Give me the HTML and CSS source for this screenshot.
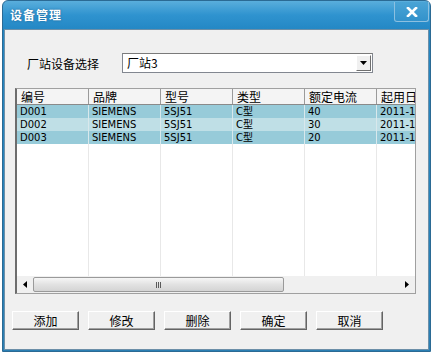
FILE: index.html
```html
<!DOCTYPE html>
<html>
<head>
<meta charset="utf-8">
<link rel="stylesheet" href="styles.css">
</head>
<body>
<div class="window">
  <div class="titlebar">
    <span class="title">设备管理</span>
    <span class="close"><svg width="12" height="10" viewBox="0 0 12 10"><path d="M2 1 L10 9 M10 1 L2 9" stroke="#fff" stroke-width="2.6" stroke-linecap="square"/></svg></span>
  </div>
  <div class="client">
    <div class="select-row">
      <span class="label">厂站设备选择</span>
      <div class="combo">
        <span class="combo-text">厂站3</span>
        <span class="combo-btn"><svg width="7" height="4" viewBox="0 0 7 4"><path d="M0 0 H7 L3.5 4 Z" fill="#000"/></svg></span>
      </div>
    </div>
    <div class="grid">
      <div class="grid-body">
        <div class="row head">
          <span class="cell">编号</span><span class="cell">品牌</span><span class="cell">型号</span><span class="cell">类型</span><span class="cell">额定电流</span><span class="cell last">起用日</span>
        </div>
        <div class="row dark">
          <span class="cell">D001</span><span class="cell">SIEMENS</span><span class="cell">5SJ51</span><span class="cell">C型</span><span class="cell">40</span><span class="cell last">2011-11</span>
        </div>
        <div class="row light">
          <span class="cell">D002</span><span class="cell">SIEMENS</span><span class="cell">5SJ51</span><span class="cell">C型</span><span class="cell">30</span><span class="cell last">2011-11</span>
        </div>
        <div class="row dark">
          <span class="cell">D003</span><span class="cell">SIEMENS</span><span class="cell">5SJ51</span><span class="cell">C型</span><span class="cell">20</span><span class="cell last">2011-11</span>
        </div>
        <div class="row empty">
          <span class="cell"></span><span class="cell"></span><span class="cell"></span><span class="cell"></span><span class="cell"></span><span class="cell last"></span>
        </div>
      </div>
      <div class="hscroll">
        <span class="arrow"><svg width="4" height="7" viewBox="0 0 4 7"><path d="M4 0 V7 L0 3.5 Z" fill="#000"/></svg></span>
        <div class="track">
          <div class="thumb"><span class="grip"></span><span class="grip"></span><span class="grip"></span></div>
        </div>
        <span class="arrow"><svg width="4" height="7" viewBox="0 0 4 7"><path d="M0 0 V7 L4 3.5 Z" fill="#000"/></svg></span>
      </div>
    </div>
    <div class="buttons">
      <button class="btn">添加</button>
      <button class="btn">修改</button>
      <button class="btn">删除</button>
      <button class="btn">确定</button>
      <button class="btn">取消</button>
    </div>
  </div>
</div>
</body>
</html>
```

FILE: styles.css
```css
* { box-sizing: border-box; }
html, body { margin: 0; padding: 0; background: #ffffff; }
body {
  width: 433px;
  height: 355px;
  font-family: "Noto Sans CJK SC", "DejaVu Sans", sans-serif;
  font-size: 12px;
  color: #000;
}
.window {
  margin: 0 2px 0 2px;
  height: 352px;
  border-radius: 6px 6px 0 0;
  background: linear-gradient(to bottom, #5aaedc 0px, #2f93cf 14px, #2387c4 29px, #2a7fb4 100%);
  border: 1px solid #2b6a94;
  display: flex;
  flex-direction: column;
}
.titlebar {
  height: 28px;
  display: flex;
  align-items: center;
  justify-content: space-between;
  padding: 0 4px 0 7px;
  position: relative;
}
.title {
  color: #fff;
  font-weight: bold;
  font-size: 12px;
  letter-spacing: 1px;
  margin-top: -1px;
  text-shadow: 0 0 2px rgba(0,40,80,0.5);
}
.close {
  position: absolute;
  right: 1px;
  top: 1px;
  width: 35px;
  height: 20px;
  border: 1px solid #8cc0e0;
  border-top: none;
  border-radius: 0 0 3px 3px;
  background: linear-gradient(to bottom, #4aa4d6, #3392cb);
  display: flex;
  align-items: center;
  justify-content: center;
}
.client {
  flex: 1;
  margin: 0 1px 1px 1px;
  background: #f0f0f0;
  border: 1px solid #6c8fa8;
  display: flex;
  flex-direction: column;
  padding: 0 12px 0 7px;
}
.select-row {
  display: flex;
  align-items: center;
  height: 20px;
  margin-top: 23px;
  margin-left: 3px;
}
.label {
  width: 107px;
  padding-left: 12px;
  font-size: 12px;
}
.combo {
  width: 251px;
  height: 20px;
  border: 1px solid #828790;
  border-top-color: #7a7a7a;
  background: #fff;
  display: flex;
  align-items: center;
  justify-content: space-between;
  padding: 1px 1px 1px 4px;
}
.combo-text {
  font-size: 12px;
  line-height: 14px;
}
.combo-btn {
  width: 15px;
  height: 16px;
  background: #f0f0f0;
  border: 1px solid;
  border-color: #fff #6f6f6f #6f6f6f #fff;
  display: flex;
  align-items: center;
  justify-content: center;
}
.grid {
  margin-top: 15px;
  margin-left: 3px;
  width: 401px;
  height: 206px;
  background: #fff;
  border: 1px solid #a0a0a0;
  border-left: 2px solid #6d6d6d;
  display: flex;
  flex-direction: column;
  overflow: hidden;
}
.grid-body {
  flex: 1;
  display: flex;
  flex-direction: column;
  overflow: hidden;
}
.row {
  display: flex;
  height: 13px;
  flex: none;
}
.row.head {
  height: 16px;
  background: #f4f4f4;
  border-bottom: 1px solid #8a8a8a;
}
.row.head .cell {
  font-family: "Noto Sans CJK SC", sans-serif;
  font-size: 12px;
  line-height: 15px;
  border-right: 1px solid #9a9a9a;
  padding-left: 4px;
}
.row.dark { background: #97cbd9; }
.row.light { background: #bfdfe6; }
.row.empty { flex: 1; }
.cell {
  width: 72px;
  flex: none;
  border-right: 1px solid #e8e8e8;
  font-family: "DejaVu Sans", "Noto Sans CJK SC", sans-serif;
  font-size: 10px;
  line-height: 13px;
  padding-left: 3px;
  white-space: nowrap;
  overflow: hidden;
}
.row.dark .cell, .row.light .cell { border-right-color: #d8e8ec; }
.cell.last { width: 60px; }
.hscroll {
  height: 17px;
  flex: none;
  display: flex;
  background: #f0f0f0;
  align-items: center;
}
.arrow {
  width: 16px;
  height: 17px;
  display: flex;
  align-items: center;
  justify-content: center;
}
.track {
  flex: 1;
  height: 17px;
  padding: 1px 0;
}
.thumb {
  width: 251px;
  height: 15px;
  border: 1px solid #9a9a9a;
  border-radius: 2px;
  background: linear-gradient(to bottom, #f6f6f6, #e2e2e2 50%, #d4d4d4);
  display: flex;
  align-items: center;
  justify-content: center;
  gap: 1px;
}
.grip {
  width: 1px;
  height: 6px;
  background: #5a5a5a;
}
.buttons {
  display: flex;
  gap: 9px;
  margin-top: 17px;
}
.btn {
  width: 67px;
  height: 19px;
  margin: 0;
  padding: 0;
  background: #f0f0f0;
  border: 1px solid;
  border-color: #ffffff #646464 #646464 #ffffff;
  box-shadow: inset -1px -1px 0 #a0a0a0;
  font-family: "Noto Sans CJK SC", sans-serif;
  font-size: 12px;
  line-height: 16px;
  color: #000;
}
```
